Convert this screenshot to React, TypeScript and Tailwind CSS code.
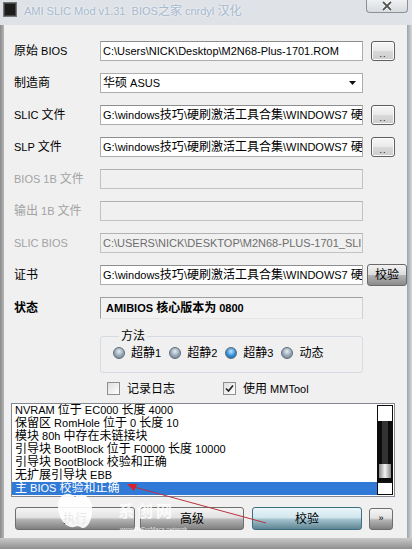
import React from 'react';

const FONT = "[font-family:'Liberation_Sans','Noto_Sans_CJK_SC',sans-serif]";

// latin text is 11px (Tahoma 8pt), CJK glyphs come out at 12px like SimSun
const mix = (s: string) => (
  <span className="whitespace-nowrap">
    {s.split(/([\u3000-\u9fff\uff00-\uffef]+)/).map((part, i) =>
      /[\u3000-\u9fff\uff00-\uffef]/.test(part) ? (
        <span key={i} className="text-[12px]">
          {part}
        </span>
      ) : (
        <React.Fragment key={i}>{part}</React.Fragment>
      )
    )}
  </span>
);

const Label = ({ children, dim, bold }: { children: string; dim?: boolean; bold?: boolean }) => (
  <div
    className={`w-[86px] shrink-0 text-[11px] leading-[14px] ${dim ? 'text-[#a3a3a3]' : 'text-black'} ${
      bold ? 'font-bold' : ''
    }`}
  >
    {mix(children)}
  </div>
);

const TextBox = ({ value, disabled }: { value?: string; disabled?: boolean }) => (
  <div
    className={`w-[263px] h-[20px] shrink-0 border flex items-center px-[2px] overflow-hidden text-[11px] ${
      disabled
        ? 'bg-[#f0f0f0] text-[#6d6d6d] border-[#c2c2c2] border-t-[#b2b2b2]'
        : 'bg-white text-black border-[#adadad] border-t-[#8e8e8e]'
    }`}
  >
    {value ? mix(value) : null}
  </div>
);

const DotsButton = () => (
  <div className="ml-[8px] w-[24px] h-[20px] shrink-0 rounded-[3px] border border-[#5f5f5f] bg-[linear-gradient(#f6f6f6,#e9e9e9_50%,#d9d9d9_51%,#cdcdcd)] shadow-[inset_0_0_0_1px_#fcfcfc] flex items-end justify-center pb-[3px]">
    <span className="text-[9px] leading-[6px] tracking-[1px] text-black">..</span>
  </div>
);

const Radio = ({ checked, label }: { checked?: boolean; label: string }) => (
  <div className="flex items-center gap-[6px]">
    <span
      className={`w-[12px] h-[12px] rounded-full border border-[#5d6b78] ${
        checked
          ? 'bg-[radial-gradient(circle_at_50%_35%,#bfe6ff,#2f8ad3_55%,#1d5e95)]'
          : 'bg-[radial-gradient(circle_at_50%_35%,#e6ecf1,#95a5b4_55%,#6b7d8d)]'
      }`}
    />
    <span className="text-[11px] leading-[14px]">{mix(label)}</span>
  </div>
);

const Check = ({ checked, label }: { checked?: boolean; label: string }) => (
  <div className="flex items-center gap-[7px]">
    <span className="w-[13px] h-[13px] border border-[#8f8f8f] bg-[linear-gradient(135deg,#dedede,#ffffff)] flex items-center justify-center">
      {checked && (
        <svg width="9" height="9" viewBox="0 0 9 9">
          <path d="M1 4.5 L3.5 7 L8 1.5" stroke="#222" strokeWidth="1.6" fill="none" />
        </svg>
      )}
    </span>
    <span className="text-[11px] leading-[14px]">{mix(label)}</span>
  </div>
);

const LOG = [
  'NVRAM 位于 EC000 长度 4000',
  '保留区 RomHole 位于 0 长度 10',
  '模块 80h 中存在未链接块',
  '引导块 BootBlock 位于 F0000 长度 10000',
  '引导块 BootBlock 校验和正确',
  '无扩展引导块 EBB',
  '主 BIOS 校验和正确',
];

const GLASS = 'bg-[linear-gradient(#f5f5f5,#e2e2e2_45%,#b4b4b4_55%,#808080)]';

export default function App() {
  return (
    <div className={`${FONT} relative w-[412px] h-[549px] overflow-hidden bg-[#dfe2e6] flex flex-col`}>
      {/* title bar */}
      <div className="h-[25px] shrink-0 flex items-start">
        <div className="ml-[3px] mt-[2px] w-[14px] h-[15px] bg-[#1c1c1c] border border-[#777] shadow-[inset_0_0_0_1px_#444]" />
        <div className="ml-[7px] mt-[4px] text-[11px] leading-[14px] text-[#a6b9cf] [text-shadow:0_0_3px_#ffffff]">
          {mix('AMI SLIC Mod v1.31\u00a0 BIOS之家 cnrdyl 汉化')}
        </div>
        <div className="ml-auto mr-[4px] w-[42px] h-[13px] rounded-b-[4px] border border-t-0 border-[#8c9096] bg-[linear-gradient(#eef0f2,#d8dbdf)] flex items-center justify-center">
          <svg width="12" height="10" viewBox="0 0 12 10">
            <path d="M2 1 L10 9 M10 1 L2 9" stroke="#fff" strokeWidth="3.4" />
            <path d="M2 1 L10 9 M10 1 L2 9" stroke="#555" strokeWidth="1.8" />
          </svg>
        </div>
      </div>

      <div className="flex flex-1">
        <div className="w-[4px] bg-[linear-gradient(90deg,#8a8a8a,#b5b5b5)]" />

        {/* client area */}
        <div className="w-[403px] bg-[#f0f0f0] flex flex-col">
          <div className="pl-[10px] pt-[16px] flex flex-col gap-[12px]">
            <div className="flex items-center h-[20px]">
              <Label>原始 BIOS</Label>
              <TextBox value="C:\Users\NICK\Desktop\M2N68-Plus-1701.ROM" />
              <DotsButton />
            </div>
            <div className="flex items-center h-[20px]">
              <Label>制造商</Label>
              <div className="w-[263px] h-[20px] border border-[#adadad] bg-white flex items-center px-[2px] text-[11px]">
                {mix('华硕 ASUS')}
                <svg className="ml-auto mr-[4px]" width="7" height="4" viewBox="0 0 7 4">
                  <path d="M0 0 H7 L3.5 4 Z" fill="#111" />
                </svg>
              </div>
            </div>
            <div className="flex items-center h-[20px]">
              <Label>SLIC 文件</Label>
              <TextBox value="G:\windows技巧\硬刷激活工具合集\WINDOWS7 硬" />
              <DotsButton />
            </div>
            <div className="flex items-center h-[20px]">
              <Label>SLP 文件</Label>
              <TextBox value="G:\windows技巧\硬刷激活工具合集\WINDOWS7 硬" />
              <DotsButton />
            </div>
            <div className="flex items-center h-[20px]">
              <Label dim>BIOS 1B 文件</Label>
              <TextBox disabled />
            </div>
            <div className="flex items-center h-[20px]">
              <Label dim>输出 1B 文件</Label>
              <TextBox disabled />
            </div>
            <div className="flex items-center h-[20px]">
              <Label dim>SLIC BIOS</Label>
              <TextBox disabled value="C:\USERS\NICK\DESKTOP\M2N68-PLUS-1701_SLI" />
            </div>
            <div className="flex items-center h-[20px]">
              <Label>证书</Label>
              <TextBox value="G:\windows技巧\硬刷激活工具合集\WINDOWS7 硬" />
              <div className="ml-[4px] w-[40px] h-[22px] shrink-0 rounded-[3px] border border-[#6a6a6a] bg-[linear-gradient(#f2f2f2,#dcdcdc_48%,#b3b3b3_52%,#8a8a8a)] flex items-center justify-center text-[12px]">
                校验
              </div>
            </div>
            <div className="flex items-center h-[22px]">
              <Label bold>状态</Label>
              <div className="w-[263px] h-[22px] border border-[#a0a0a0] border-r-[#d0d0d0] border-b-[#e6e6e6] bg-[#f2f2f2] flex items-center px-[5px] text-[11px] font-bold">
                {mix('AMIBIOS 核心版本为 0800')}
              </div>
            </div>
          </div>

          {/* method group */}
          <fieldset className="ml-[96px] mt-[10px] w-[263px] border border-[#d5dbe0] rounded-[3px] pl-[12px] pt-[3px] pb-[12px]">
            <legend className="ml-[6px] px-[2px] text-[12px] leading-[14px]">方法</legend>
            <div className="flex items-center gap-[8px]">
              <Radio label="超静1" />
              <Radio label="超静2" />
              <Radio checked label="超静3" />
              <Radio label="动态" />
            </div>
          </fieldset>

          <div className="ml-[103px] mt-[9px] h-[13px] flex items-center">
            <div className="w-[116px]">
              <Check label="记录日志" />
            </div>
            <Check checked label="使用 MMTool" />
          </div>

          {/* log list */}
          <div className="ml-[7px] mt-[8px] w-[384px] h-[94px] border border-[#828790] bg-white flex">
            <div className="flex-1 flex flex-col text-[11px] leading-[13px] overflow-hidden">
              {LOG.map((l, i) => (
                <div
                  key={i}
                  className={`h-[13px] pl-[3px] ${i === LOG.length - 1 ? 'bg-[#3079d6] text-white' : 'text-black'}`}
                >
                  {mix(l)}
                </div>
              ))}
            </div>
            <div className="w-[16px] my-[1px] mr-[1px] bg-[#0c0c0c] flex flex-col items-center">
              <div className="w-[14px] h-[15px] mt-[1px] bg-white" />
              <div className="flex-1 w-[6px] bg-[#333]" />
              <div className="w-[12px] h-[14px] bg-[linear-gradient(90deg,#888,#f4f4f4_50%,#888)]" />
              <div className="h-[3px]" />
              <div className="w-[14px] h-[13px] mb-[1px] bg-white border-t-[2px] border-t-[#111]" />
            </div>
          </div>

          {/* bottom buttons */}
          <div className="ml-[11px] mt-[10px] flex items-center h-[23px]">
            <div className={`w-[120px] h-[23px] rounded-[3px] border border-[#6e6e6e] ${GLASS} flex items-center justify-center text-[12px]`}>
              执行
            </div>
            <div className={`ml-[5px] w-[104px] h-[23px] rounded-[3px] border border-[#6e6e6e] ${GLASS} flex items-center justify-center text-[12px]`}>
              高级
            </div>
            <div className="ml-[8px] w-[110px] h-[23px] rounded-[3px] border border-[#3d6f80] bg-[linear-gradient(#eaf5fa,#d2e6ee_45%,#a1c2cd_55%,#5f8493)] flex items-center justify-center text-[12px]">
              校验
            </div>
            <div className={`ml-[7px] w-[24px] h-[22px] rounded-[3px] border border-[#6e6e6e] ${GLASS} flex items-center justify-center text-[9px]`}>
              »
            </div>
          </div>
        </div>

        <div className="w-[5px] bg-[linear-gradient(90deg,#9ea3a8,#d5d9dd)]" />
      </div>
      <div className="h-[11px] shrink-0 bg-[linear-gradient(#c9c9c9,#8f8f8f)]" />

      {/* watermark */}
      <svg className="absolute left-[55px] top-[489px] pointer-events-none" width="40" height="42" viewBox="0 0 40 42">
        <path
          d="M20 8 C14 2 3 4 3 17 C3 30 12 40 19 38 C22 37 24 37 27 39 C33 40 38 30 37 18 C36 6 26 3 20 8 Z"
          fill="#fff"
          opacity="0.9"
        />
      </svg>
      <div className="absolute left-[118px] top-[503px] text-[16px] leading-[18px] font-bold tracking-[3px] text-white/80 pointer-events-none">
        系创网
      </div>
      <div className="absolute left-[120px] top-[526px] text-[6px] leading-[7px] text-white/80 pointer-events-none">
        www.PcForMacs.network
      </div>

      {/* red annotation arrow */}
      <svg className="absolute left-0 top-0 pointer-events-none" width="412" height="549">
        <line x1="266" y1="523" x2="134" y2="487" stroke="#b8323c" strokeWidth="1" />
        <path d="M127 484 L137 484 L134 491 Z" fill="#d8202a" />
      </svg>
    </div>
  );
}
